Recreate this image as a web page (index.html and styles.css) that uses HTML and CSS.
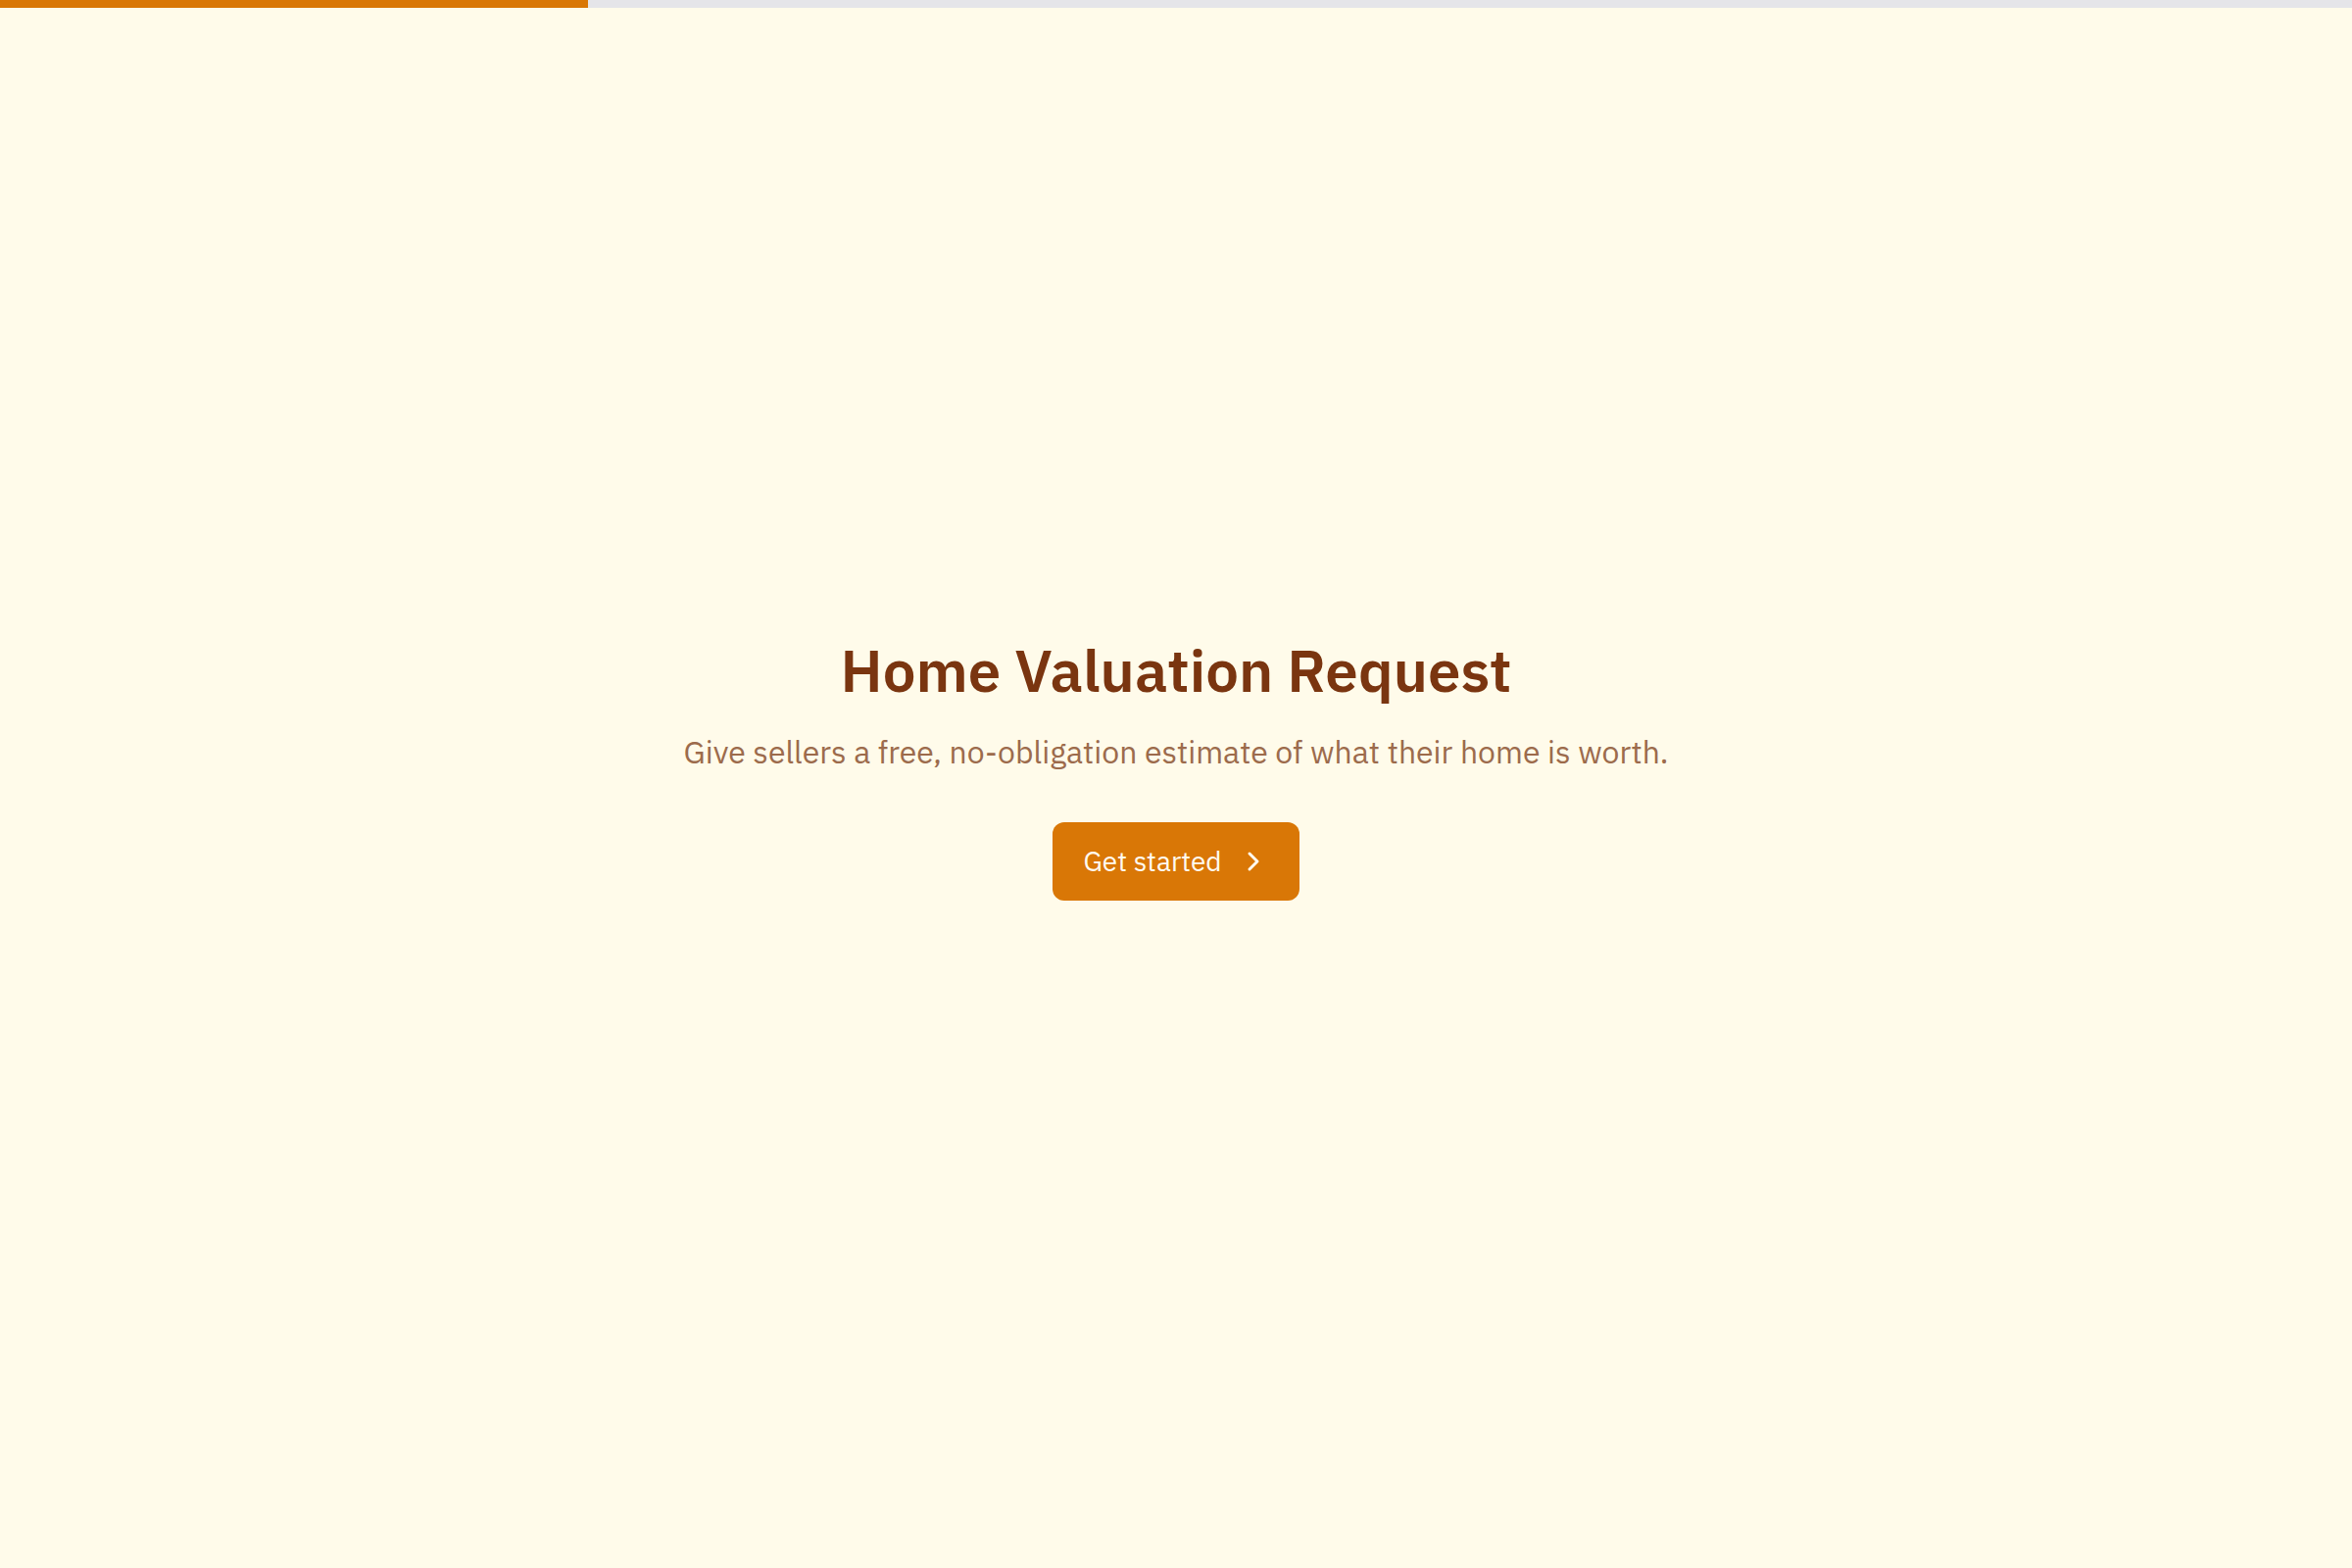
FILE: index.html
```html
<!DOCTYPE html>
<html lang="en">
<head>
<meta charset="utf-8">
<title>Home Valuation Request</title>
<link rel="stylesheet" href="styles.css">
</head>
<body>
<div class="progress"><div class="progress-fill" style="width: 25%"></div></div>
<main class="intro">
  <h1 class="title">Home Valuation Request</h1>
  <p class="subtitle">Give sellers a free, no-obligation estimate of what their home is worth.</p>
  <button class="start-btn" type="button">
    <span>Get started</span>
    <svg class="chev" viewBox="0 0 24 24" width="32" height="32" fill="none" stroke="currentColor" stroke-width="2.25" stroke-linecap="round" stroke-linejoin="round"><path d="m9 18 6-6-6-6"/></svg>
  </button>
</main>
</body>
</html>
```
FILE: styles.css
```css
* { box-sizing: border-box; }
html, body { margin: 0; padding: 0; }
body {
  background: #fffbea;
  font-family: "IBM Plex Sans", "Noto Sans", sans-serif;
  min-height: 100vh;
  display: flex;
  flex-direction: column;
}
.progress {
  height: 8px;
  background: #e5e5e9;
  flex: none;
}
.progress-fill {
  height: 100%;
  background: #d97706;
}
.intro {
  flex: 1;
  display: flex;
  flex-direction: column;
  align-items: center;
  justify-content: center;
  padding-bottom: 42px;
  text-align: center;
}
.title {
  margin: 0;
  font-size: 60px;
  line-height: 72px;
  font-weight: 600;
  color: #7a3510;
}
.subtitle {
  margin: 23px 0 0;
  font-size: 32px;
  line-height: 48px;
  color: #9c6b4c;
}
.start-btn {
  margin-top: 48px;
  height: 80px;
  padding: 0 31px 0 31px;
  display: inline-flex;
  align-items: center;
  gap: 16px;
  border: none;
  border-radius: 12px;
  background: #d97706;
  color: #fffaf0;
  font-family: inherit;
  font-size: 28px;
  cursor: pointer;
}
.chev { display: block; }
```
